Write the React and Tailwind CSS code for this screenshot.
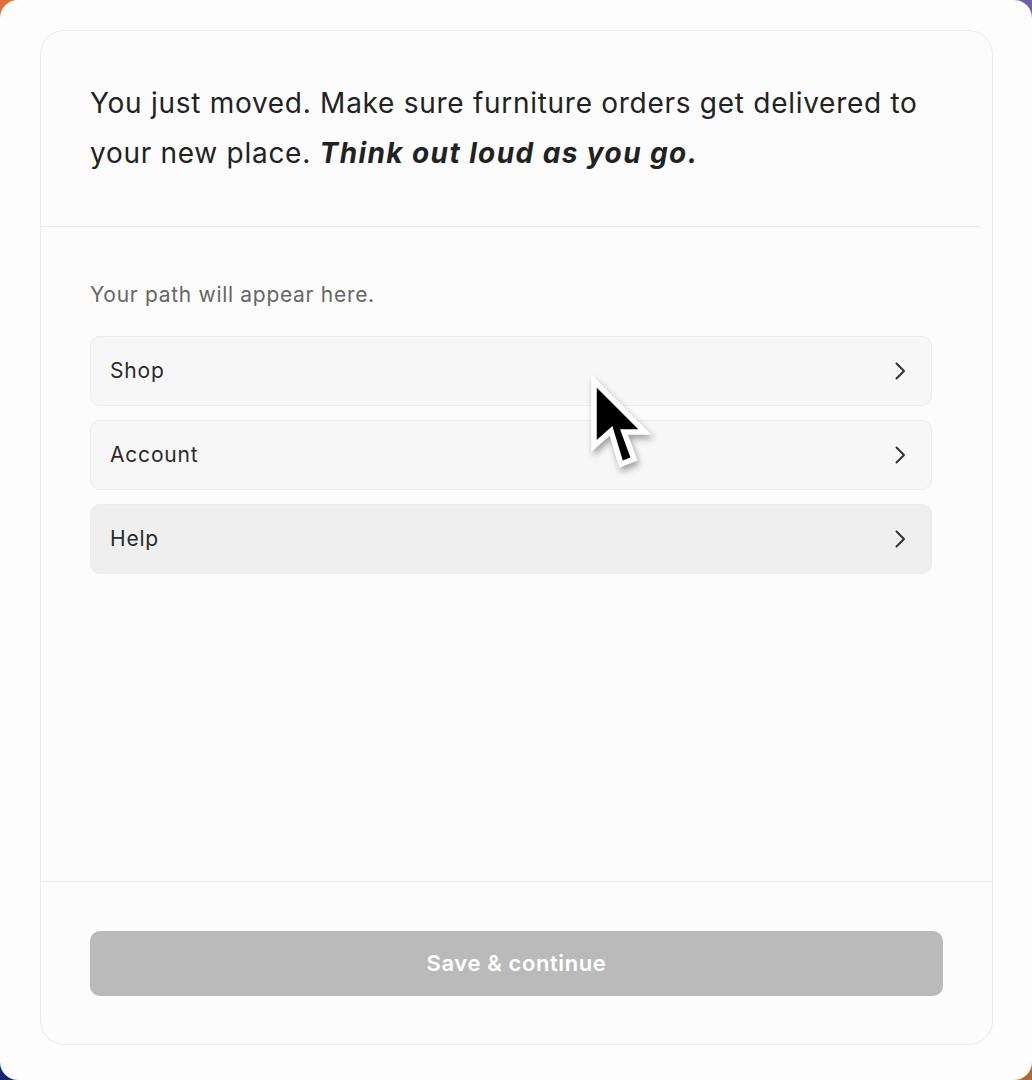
const items = [
  { label: "Shop", active: false },
  { label: "Account", active: false },
  { label: "Help", active: true },
];

function Chevron() {
  return (
    <svg width="11" height="18" viewBox="0 0 11 18" fill="none">
      <path
        d="M1.5 1.5 L9 9 L1.5 16.5"
        stroke="#333"
        strokeWidth="2"
        strokeLinecap="round"
        strokeLinejoin="round"
      />
    </svg>
  );
}

function Cursor() {
  // macOS style pointer drawn over the list
  return (
    <svg
      width="80"
      height="108"
      viewBox="0 0 80 108"
      className="absolute left-[580px] top-[368px] pointer-events-none drop-shadow-[2px_4px_3px_rgba(0,0,0,0.35)]"
    >
      <polygon
        points="14,13 14,78 31,63 41,96 54,91 44,64 65,64"
        fill="#000"
        stroke="#fff"
        strokeWidth="5.5"
        strokeLinejoin="miter"
      />
    </svg>
  );
}

export default function App() {
  return (
    <div
      className="relative w-[1032px] h-[1080px] overflow-hidden bg-[conic-gradient(#7060a8_0deg_90deg,#b0692f_90deg_180deg,#12297a_180deg_270deg,#e0703a_270deg_360deg)]"
      style={{ fontFamily: "Inter, 'Noto Sans', sans-serif" }}
    >
      <div className="flex h-full w-full rounded-[18px] bg-[#fdfdfd] pt-[30px] pl-[40px] pr-[39px] pb-[35px]">
        <div className="flex flex-1 flex-col rounded-[24px] border border-[#ebebeb] bg-[#fcfcfc]">
          <div className="pt-[47px] pb-[48px] pl-[49px] pr-[40px]">
            <p className="text-[28px] leading-[50px] tracking-[0.72px] text-[#222]">
              You just moved. Make sure furniture orders get delivered to
              your new place.{" "}
              <span className="font-bold italic tracking-[1.4px]">
                Think out loud as you go.
              </span>
            </p>
          </div>
          <div className="mr-[12px] h-px bg-[#e9e9e9]" />

          <div className="flex-1 pt-[54px] pl-[49px] pr-[60px]">
            <p className="text-[21px] leading-[28px] tracking-[0.7px] text-[#666]">
              Your path will appear here.
            </p>
            <div className="mt-[27px] flex flex-col gap-[14px]">
              {items.map((item) => (
                <div
                  key={item.label}
                  className={
                    item.active
                      ? "flex h-[70px] items-center justify-between rounded-[10px] border border-[#ebebeb] bg-[#efefef] pl-[19px] pr-[25px]"
                      : "flex h-[70px] items-center justify-between rounded-[10px] border border-[#ebebeb] bg-[#f7f7f7] pl-[19px] pr-[25px]"
                  }
                >
                  <span className="text-[21px] tracking-[0.8px] text-[#2a2a2a]">
                    {item.label}
                  </span>
                  <Chevron />
                </div>
              ))}
            </div>
          </div>

          <div className="border-t border-[#ebebeb] pt-[49px] pb-[48px] pl-[49px] pr-[49px]">
            <button
              disabled
              className="flex h-[65px] w-full items-center justify-center rounded-[10px] bg-[#bababa] text-[22px] font-semibold tracking-[0.6px] text-white"
            >
              Save &amp; continue
            </button>
          </div>
        </div>
      </div>
      <Cursor />
    </div>
  );
}
